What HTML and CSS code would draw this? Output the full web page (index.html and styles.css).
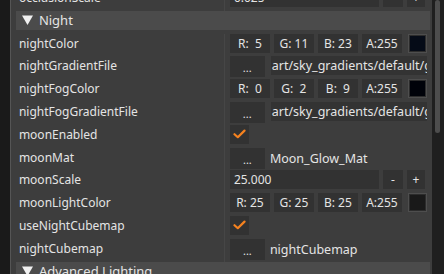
FILE: index.html
```html
<!DOCTYPE html>
<html lang="en">

<head>
    <meta charset="UTF-8">
    <meta name="viewport" content="width=device-width, initial-scale=1.0">
    <title>Inspector</title>
    <link rel="stylesheet" href="styles.css">
</head>

<body>
    <div class="app">
        <div class="side"></div>

        <div class="panel">
            <div class="list">
                <!-- scrolled partly out of view -->
                <div class="row">
                    <div class="label">occlusionScale</div>
                    <div class="value">
                        <div class="field num">0.025</div>
                        <div class="btn small">-</div>
                        <div class="btn small">+</div>
                    </div>
                </div>

                <div class="section">
                    <svg class="arrow" width="11" height="10" viewBox="0 0 11 10"><path d="M0 0.5 H11 L5.5 10 Z" fill="#f0f0f0"/></svg>
                    Night
                </div>

                <div class="row">
                    <div class="label">nightColor</div>
                    <div class="value">
                        <div class="chan">R:  5</div>
                        <div class="chan">G: 11</div>
                        <div class="chan">B: 23</div>
                        <div class="chan">A:255</div>
                        <div class="swatch"><div class="swatch-fill night"></div></div>
                    </div>
                </div>
                <div class="row">
                    <div class="label">nightGradientFile</div>
                    <div class="value">
                        <div class="btn dots">...</div>
                        <div class="path">art/sky_gradients/default/gradient_night.png</div>
                    </div>
                </div>
                <div class="row">
                    <div class="label">nightFogColor</div>
                    <div class="value">
                        <div class="chan">R:  0</div>
                        <div class="chan">G:  2</div>
                        <div class="chan">B:  9</div>
                        <div class="chan">A:255</div>
                        <div class="swatch"><div class="swatch-fill fog"></div></div>
                    </div>
                </div>
                <div class="row">
                    <div class="label">nightFogGradientFile</div>
                    <div class="value">
                        <div class="btn dots">...</div>
                        <div class="path">art/sky_gradients/default/gradient_fog_night.png</div>
                    </div>
                </div>
                <div class="row">
                    <div class="label">moonEnabled</div>
                    <div class="value">
                        <div class="check">
                            <svg width="13" height="10" viewBox="0 0 13 10"><path d="M1.5 5.2 L4.8 8.2 L11.5 1.6" fill="none" stroke="#f5821f" stroke-width="2.2" stroke-linecap="round" stroke-linejoin="round"/></svg>
                        </div>
                    </div>
                </div>
                <div class="row">
                    <div class="label">moonMat</div>
                    <div class="value">
                        <div class="btn dots">...</div>
                        <div class="name">Moon_Glow_Mat</div>
                    </div>
                </div>
                <div class="row">
                    <div class="label">moonScale</div>
                    <div class="value">
                        <div class="field num">25.000</div>
                        <div class="btn small">-</div>
                        <div class="btn small">+</div>
                    </div>
                </div>
                <div class="row">
                    <div class="label">moonLightColor</div>
                    <div class="value">
                        <div class="chan">R: 25</div>
                        <div class="chan">G: 25</div>
                        <div class="chan">B: 25</div>
                        <div class="chan">A:255</div>
                        <div class="swatch"><div class="swatch-fill moon"></div></div>
                    </div>
                </div>
                <div class="row">
                    <div class="label">useNightCubemap</div>
                    <div class="value">
                        <div class="check">
                            <svg width="13" height="10" viewBox="0 0 13 10"><path d="M1.5 5.2 L4.8 8.2 L11.5 1.6" fill="none" stroke="#f5821f" stroke-width="2.2" stroke-linecap="round" stroke-linejoin="round"/></svg>
                        </div>
                    </div>
                </div>
                <div class="row">
                    <div class="label">nightCubemap</div>
                    <div class="value">
                        <div class="btn dots">...</div>
                        <div class="name">nightCubemap</div>
                    </div>
                </div>

                <div class="section">
                    <svg class="arrow" width="11" height="10" viewBox="0 0 11 10"><path d="M0 0.5 H11 L5.5 10 Z" fill="#f0f0f0"/></svg>
                    Advanced Lighting
                </div>
            </div>
        </div>

        <div class="scrollbar">
            <div class="thumb"></div>
        </div>
    </div>
</body>

</html>
```

FILE: styles.css
```css
body {
    margin: 0;
    padding: 0;
    background-color: #1b1b1b;
    font-family: "Noto Sans", "Open Sans", sans-serif;
    font-size: 12px;
    color: #e4e4e4;
    overflow: hidden;
}

.app {
    display: flex;
    height: 274px;
    width: 444px;
    overflow: hidden;
}

.side {
    width: 10px;
    background-color: #1a1a1a;
}

.panel {
    width: 421px;
    background-color: #3d3d3d;
    border-left: 1px solid #555;
    padding-left: 5px;
    overflow: hidden;
}

.list {
    width: 414px;
    margin-top: -12px;
}

.row {
    display: flex;
    align-items: flex-start;
    height: 22.8px;
}

.label {
    width: 205px;
    padding-left: 3px;
    line-height: 19px;
    white-space: nowrap;
    border-right: 1px solid #464646;
    height: 22.8px;
}

.value {
    display: flex;
    gap: 4px;
    padding-left: 5px;
    width: 197px;
    overflow: hidden;
}

.section {
    display: flex;
    align-items: center;
    height: 19px;
    margin-bottom: 3.8px;
    background-color: #4b4b4b;
    padding-left: 6px;
    font-size: 13px;
}

.arrow {
    margin-right: 6px;
}

.chan {
    width: 40px;
    height: 19px;
    line-height: 19px;
    background-color: #323232;
    text-align: center;
    white-space: pre;
}

.swatch {
    box-sizing: border-box;
    width: 19px;
    height: 19px;
    margin-left: 2px;
    border: 1px solid #4e4e4e;
    background-color: #2c2c2c;
    padding: 1px;
}

.swatch-fill {
    width: 100%;
    height: 100%;
}

.swatch-fill.night {
    background-color: #050b17;
}

.swatch-fill.fog {
    background-color: #000209;
}

.swatch-fill.moon {
    background-color: #191919;
}

.btn {
    background-color: #323232;
    text-align: center;
    height: 19px;
    line-height: 19px;
}

.btn.small {
    width: 20px;
}

.btn.small:last-child {
    width: 18px;
}

.btn.dots {
    width: 35px;
    height: 21px;
    line-height: 24px;
    font-size: 11px;
}

.field {
    width: 145px;
    height: 19px;
    line-height: 19px;
    background-color: #323232;
    padding-left: 4px;
}

.path {
    width: 156px;
    height: 19px;
    line-height: 19px;
    margin-left: 2px;
    background-color: #333;
    white-space: nowrap;
    overflow: hidden;
    padding-left: 1px;
    font-size: 12.5px;
}

.name {
    margin-left: 1px;
    line-height: 21px;
    white-space: nowrap;
    font-size: 12.5px;
}

.check {
    width: 19px;
    height: 19px;
    background-color: #323232;
    display: flex;
    align-items: center;
    justify-content: center;
}

.scrollbar {
    width: 12px;
    background-color: #1f1f1f;
    position: relative;
}

.thumb {
    position: absolute;
    left: 3px;
    top: 0;
    width: 5px;
    height: 133px;
    border-radius: 3px;
    background-color: #4d4d4d;
}
```
